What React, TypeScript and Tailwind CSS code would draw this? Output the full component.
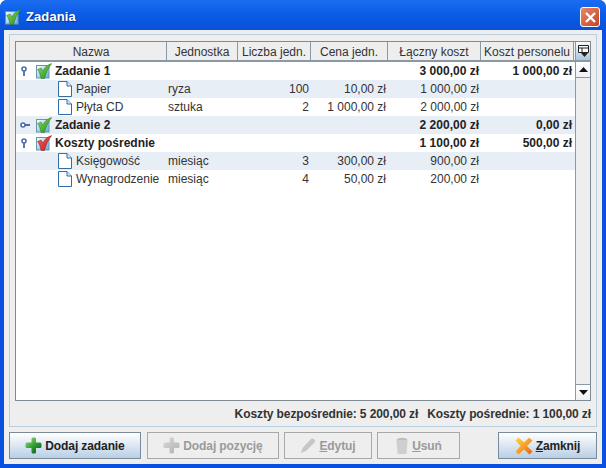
import React from "react";

const cols = "grid grid-cols-[151px_71px_73px_77px_93px_93px]";

function Check({ id, color, light, dark }: { id: string; color: string; light: string; dark: string }) {
  return (
    <svg width="16" height="16" viewBox="0 0 16 16">
      <defs>
        <linearGradient id={`box${id}`} x1="0" y1="0" x2="1" y2="1">
          <stop offset="0" stopColor="#ffffff" />
          <stop offset="1" stopColor="#58ade6" />
        </linearGradient>
        <linearGradient id={`tick${id}`} x1="0" y1="0" x2="1" y2="1">
          <stop offset="0" stopColor={light} />
          <stop offset="1" stopColor={color} />
        </linearGradient>
      </defs>
      <rect x="0.5" y="2.5" width="12.5" height="12.5" fill={`url(#box${id})`} stroke="#6a97a8" />
      <path d="M1.5 6.5 L5 5 L7 8 C8.5 4.5 11.5 1.5 15.8 0.5 C12.5 4.5 10 9.5 8.5 15.5 L5 15.5 C4.5 12 3.5 9 1.5 6.5 Z" fill={`url(#tick${id})`} stroke={dark} strokeWidth="0.4" />
    </svg>
  );
}

function Doc() {
  return (
    <svg width="14" height="16" viewBox="0 0 14 16">
      <path d="M0.5 0.5 H9 L13.5 5 V15.5 H0.5 Z" fill="#ffffff" stroke="#2f6ca8" />
      <path d="M9 0.5 V5 H13.5" fill="#dfeaf5" stroke="#2f6ca8" />
    </svg>
  );
}

function Handle({ open }: { open: boolean }) {
  return open ? (
    <svg width="8" height="10" viewBox="0 0 8 10">
      <circle cx="4" cy="3" r="2" fill="#fff" stroke="#4a6ea9" strokeWidth="1.6" />
      <path d="M4 5 V10" stroke="#4a6ea9" strokeWidth="1.8" />
    </svg>
  ) : (
    <svg width="10" height="8" viewBox="0 0 10 8">
      <circle cx="3" cy="4" r="2" fill="#fff" stroke="#4a6ea9" strokeWidth="1.6" />
      <path d="M5 4 H10" stroke="#4a6ea9" strokeWidth="1.8" />
    </svg>
  );
}

function Plus({ on }: { on: boolean }) {
  return (
    <svg width="17" height="17" viewBox="0 0 17 17">
      <defs>
        <linearGradient id={on ? "plusOn" : "plusOff"} x1="0" y1="0" x2="0.8" y2="1">
          <stop offset="0" stopColor={on ? "#a8e07a" : "#dcdcdc"} />
          <stop offset="0.5" stopColor={on ? "#3aa63a" : "#c6c6c6"} />
          <stop offset="1" stopColor={on ? "#0a5a1c" : "#b4b4b4"} />
        </linearGradient>
      </defs>
      <path
        d="M6.5 1.5 Q6.5 0.5 8 0.5 L10 0.5 Q11 0.5 11 2 V5.5 H15 Q16.5 5.5 16.5 7 V9.5 Q16.5 11 15 11 H11 V15 Q11 16.5 9.5 16.5 H8 Q6.5 16.5 6.5 15 V11 H2 Q0.5 11 0.5 9.5 V7 Q0.5 5.5 2 5.5 H6.5 Z"
        fill={`url(#${on ? "plusOn" : "plusOff"})`}
      />
    </svg>
  );
}

function Pencil() {
  return (
    <svg width="16" height="17" viewBox="0 0 16 17">
      <path d="M0.5 16 L3 10.5 L11.5 1.5 C13.5 1 15.5 3 15 5 L6 14 Z" fill="#c6c6c6" />
    </svg>
  );
}

function Trash() {
  return (
    <svg width="14" height="18" viewBox="0 0 14 18">
      <ellipse cx="7" cy="3" rx="5.5" ry="2.2" fill="#bdbdbd" />
      <path d="M1.5 3 H12.5 L11.5 17 H2.5 Z" fill="#cfcfcf" />
    </svg>
  );
}

function XIcon() {
  return (
    <svg width="18" height="18" viewBox="0 0 18 18">
      <defs>
        <linearGradient id="xg" x1="0" y1="0" x2="1" y2="1">
          <stop offset="0" stopColor="#ffd83a" />
          <stop offset="0.5" stopColor="#f8a028" />
          <stop offset="1" stopColor="#e85a20" />
        </linearGradient>
      </defs>
      <path d="M0.5 3.5 L3.5 0.5 L9 5.5 L14 0.8 L17.5 3.5 L12 9 L17.5 14.5 L14.5 17.5 L9 12.5 L3.5 17.5 L0.5 14.5 L5.5 9 Z" fill="url(#xg)" />
    </svg>
  );
}

type Row = {
  kind: "group" | "item";
  name: string;
  open?: boolean;
  red?: boolean;
  unit?: string;
  qty?: string;
  price?: string;
  total: string;
  staff?: string;
};

const rows: Row[] = [
  { kind: "group", name: "Zadanie 1", open: true, total: "3 000,00 zł", staff: "1 000,00 zł" },
  { kind: "item", name: "Papier", unit: "ryza", qty: "100", price: "10,00 zł", total: "1 000,00 zł" },
  { kind: "item", name: "Płyta CD", unit: "sztuka", qty: "2", price: "1 000,00 zł", total: "2 000,00 zł" },
  { kind: "group", name: "Zadanie 2", open: false, total: "2 200,00 zł", staff: "0,00 zł" },
  { kind: "group", name: "Koszty pośrednie", open: true, red: true, total: "1 100,00 zł", staff: "500,00 zł" },
  { kind: "item", name: "Księgowość", unit: "miesiąc", qty: "3", price: "300,00 zł", total: "900,00 zł" },
  { kind: "item", name: "Wynagrodzenie", unit: "miesiąc", qty: "4", price: "50,00 zł", total: "200,00 zł" },
];

const headers = ["Nazwa", "Jednostka", "Liczba jedn.", "Cena jedn.", "Łączny koszt", "Koszt personelu"];

function Btn({ w, on, icon, children }: { w: string; on: boolean; icon: React.ReactNode; children: React.ReactNode }) {
  return (
    <div
      className={`${w} h-[27px] flex items-center justify-center gap-[3px] border text-[12px] font-bold tracking-[-0.1px] ${
        on
          ? "border-[#7a8a99] bg-gradient-to-b from-[#ffffff] to-[#b8cfe5] text-[#222222]"
          : "border-[#a8a8a8] bg-[#eeeeee] text-[#9a9a9a]"
      }`}
    >
      {icon}
      <span>{children}</span>
    </div>
  );
}

export default function App() {
  return (
    <div className="w-[606px] h-[468px] flex flex-col overflow-hidden rounded-t-[7px] bg-[#0a50e0] font-['Liberation_Sans',sans-serif]">
      <div className="h-[30px] shrink-0 flex items-center pt-[4px] pl-[5px] pr-[6px] bg-gradient-to-b from-[#1a6cf0] via-[#0a5ce6] to-[#0a50d8]">
        <Check id="t" color="#1f8a1f" light="#8fdc5a" dark="#1d6b18" />
        <span className="ml-[5px] text-[13px] font-bold tracking-[0.1px] text-white [text-shadow:1px_1px_1px_#0a2f90]">Zadania</span>
        <div className="ml-auto w-[20px] h-[20px] rounded-[3px] border border-white bg-gradient-to-br from-[#e8876a] to-[#c8401c] flex items-center justify-center">
          <svg width="13" height="13" viewBox="0 0 13 13">
            <path d="M2 2 L11 11 M11 2 L2 11" stroke="#ffffff" strokeWidth="2.4" />
          </svg>
        </div>
      </div>
      <div className="flex-1 min-h-0 mx-[4px] mb-[4px] bg-[#eeeeee] flex flex-col pt-[4px] px-[5px] pb-[5px]">
        <div className="h-[394px] border border-[#b8cfe0] flex flex-col pt-[6px] px-[5px]">
          <div className="h-[360px] border border-[#7f8a92] bg-white flex flex-col shrink-0">
            <div className="h-[20px] shrink-0 flex border-b-2 border-[#8a99a6] bg-[#eeeeee]">
              <div className={`${cols} flex-1`}>
                {headers.map((h) => (
                  <div key={h} className="border-r border-[#8a99a6] pt-[1px] flex items-center justify-center text-[12px] text-[#333333] whitespace-nowrap overflow-hidden">
                    {h}
                  </div>
                ))}
              </div>
              <div className="w-[15px] shrink-0 bg-gradient-to-b from-[#ffffff] to-[#a8c4dc] border-l border-[#8a99a6] flex items-center justify-center">
                <svg width="11" height="13" viewBox="0 0 11 13">
                  <path d="M0.5 0.5 H10.5 V7.5 H0.5 Z M0.5 3 H10.5 M4 3 V7.5" fill="#ffffff" stroke="#222222" strokeWidth="1" />
                  <path d="M3 8 H10 L6.5 12 Z" fill="#222222" />
                </svg>
              </div>
            </div>
            <div className="flex-1 min-h-0 flex">
              <div className="flex-1 flex flex-col">
                {rows.map((r, i) => {
                  const bold = r.kind === "group";
                  return (
                    <div
                      key={r.name}
                      className={`${cols} h-[18px] items-center text-[12px] ${i % 2 === 1 ? "bg-[#e8eef6]" : "bg-white"} ${bold ? "font-bold text-[#222222]" : "text-[#333333]"}`}
                    >
                      {bold ? (
                        <div className="flex items-center whitespace-nowrap">
                          <div className="w-[20px] pl-[4px] flex items-center"><Handle open={!!r.open} /></div>
                          <Check
                            id={r.name.replace(/[^a-zA-Z0-9]/g, "")}
                            color={r.red ? "#c81818" : "#1f8a1f"}
                            light={r.red ? "#f26060" : "#8fdc5a"}
                            dark={r.red ? "#8c1010" : "#1d6b18"}
                          />
                          <span className="ml-[3px]">{r.name}</span>
                        </div>
                      ) : (
                        <div className="flex items-center whitespace-nowrap pl-[42px]">
                          <Doc />
                          <span className="ml-[4px]">{r.name}</span>
                        </div>
                      )}
                      <div className="pl-[1px]">{r.unit}</div>
                      <div className="text-right pr-[2px]">{r.qty}</div>
                      <div className="text-right pr-[2px]">{r.price}</div>
                      <div className="text-right pr-[2px]">{r.total}</div>
                      <div className="text-right pr-[2px]">{r.staff}</div>
                    </div>
                  );
                })}
              </div>
              <div className="w-[15px] shrink-0 border-l border-[#8a99a6] bg-[#eeeeee] flex flex-col">
                <div className="h-[16px] bg-gradient-to-b from-[#ffffff] to-[#eef2f6] border-b border-[#8a99a6] flex items-center justify-center">
                  <svg width="9" height="5" viewBox="0 0 9 5"><path d="M0 5 L4.5 0 L9 5 Z" fill="#111111" /></svg>
                </div>
                <div className="flex-1" />
                <div className="h-[16px] bg-gradient-to-b from-[#ffffff] to-[#eef2f6] border-t border-[#8a99a6] flex items-center justify-center">
                  <svg width="9" height="5" viewBox="0 0 9 5"><path d="M0 0 L9 0 L4.5 5 Z" fill="#111111" /></svg>
                </div>
              </div>
            </div>
          </div>
          <div className="flex-1 flex items-center justify-end gap-[9px] text-[12px] font-bold tracking-[-0.1px] text-[#333333] whitespace-nowrap">
            <span>Koszty bezpośrednie: 5 200,00 zł</span>
            <span>Koszty pośrednie: 1 100,00 zł</span>
          </div>
        </div>
        <div className="flex mt-[5px]">
          <Btn w="w-[132px]" on icon={<Plus on />}>Dodaj zadanie</Btn>
          <div className="ml-[6px]"><Btn w="w-[132px]" on={false} icon={<Plus on={false} />}>Dodaj pozycję</Btn></div>
          <div className="ml-[5px]"><Btn w="w-[88px]" on={false} icon={<Pencil />}><u>E</u>dytuj</Btn></div>
          <div className="ml-[5px]"><Btn w="w-[83px]" on={false} icon={<Trash />}><u>U</u>suń</Btn></div>
          <div className="ml-auto"><Btn w="w-[99px]" on icon={<XIcon />}><u>Z</u>amknij</Btn></div>
        </div>
      </div>
    </div>
  );
}
